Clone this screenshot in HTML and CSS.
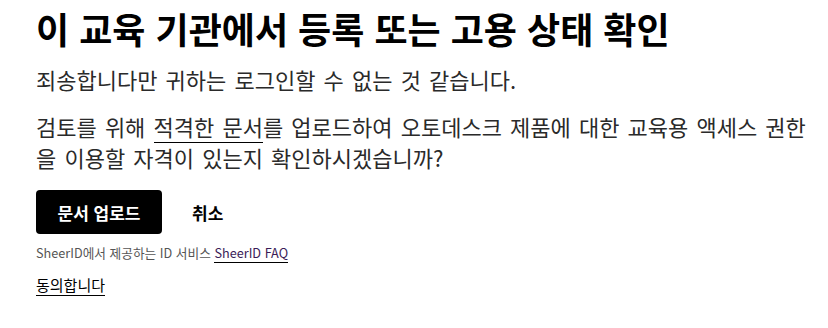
FILE: index.html
```html
<!DOCTYPE html>
<html lang="ko">
<head>
<meta charset="utf-8">
<link rel="stylesheet" href="styles.css">
</head>
<body>
<main class="page">
  <h1 class="title">이 교육 기관에서 등록 또는 고용 상태 확인</h1>
  <p class="lead">죄송합니다만 귀하는 로그인할 수 없는 것 같습니다.</p>
  <p class="body">검토를 위해 <a class="doc-link" href="#">적격한 문서</a>를 업로드하여 오토데스크 제품에 대한 교육용 액세스 권한을 이용할 자격이 있는지 확인하시겠습니까?</p>
  <div class="actions">
    <button class="btn-primary" type="button">문서 업로드</button>
    <button class="btn-text" type="button">취소</button>
  </div>
  <p class="powered">SheerID에서 제공하는 ID 서비스 <a class="faq" href="#">SheerID FAQ</a></p>
  <p class="agree"><a class="agree-link" href="#">동의합니다</a></p>
</main>
</body>
</html>
```
FILE: styles.css
```css
html, body {
  margin: 0;
  padding: 0;
  background: #fff;
}
body {
  font-family: "Noto Sans CJK KR", "Noto Sans", sans-serif;
  color: #000;
}
.page {
  padding: 6px 0 0 36px;
  width: 772px;
}
.title {
  margin: 0;
  font-size: 36px;
  font-weight: 700;
  line-height: 44px;
}
.lead {
  margin: 14px 0 0 0;
  font-size: 22px;
  line-height: 31px;
  word-spacing: 2px;
  color: #2a2a2a;
}
.body {
  margin: 16px 0 0 0;
  font-size: 22px;
  line-height: 31px;
  word-spacing: 2px;
  color: #2a2a2a;
}
.doc-link {
  color: inherit;
  text-decoration: none;
  border-bottom: 1px solid #000;
}
.actions {
  display: flex;
  align-items: center;
  margin-top: 17px;
}
.btn-primary {
  font-family: inherit;
  background: #000;
  color: #fff;
  border: 0;
  border-radius: 4px;
  height: 44px;
  width: 126px;
  font-size: 17px;
  font-weight: 700;
  padding: 0;
}
.btn-text {
  font-family: inherit;
  background: none;
  border: 0;
  font-size: 17px;
  font-weight: 700;
  color: #000;
  margin-left: 30px;
  padding: 0;
}
.powered {
  margin: 9px 0 0 0;
  font-size: 12.7px;
  line-height: 20px;
  color: #555;
}
.faq {
  color: #3b1b57;
  text-decoration: none;
  border-bottom: 1px solid #000;
}
.agree {
  margin: 11px 0 0 0;
  font-size: 15px;
  line-height: 22px;
}
.agree-link {
  color: #000;
  text-decoration: none;
  border-bottom: 1px solid #000;
}
```
